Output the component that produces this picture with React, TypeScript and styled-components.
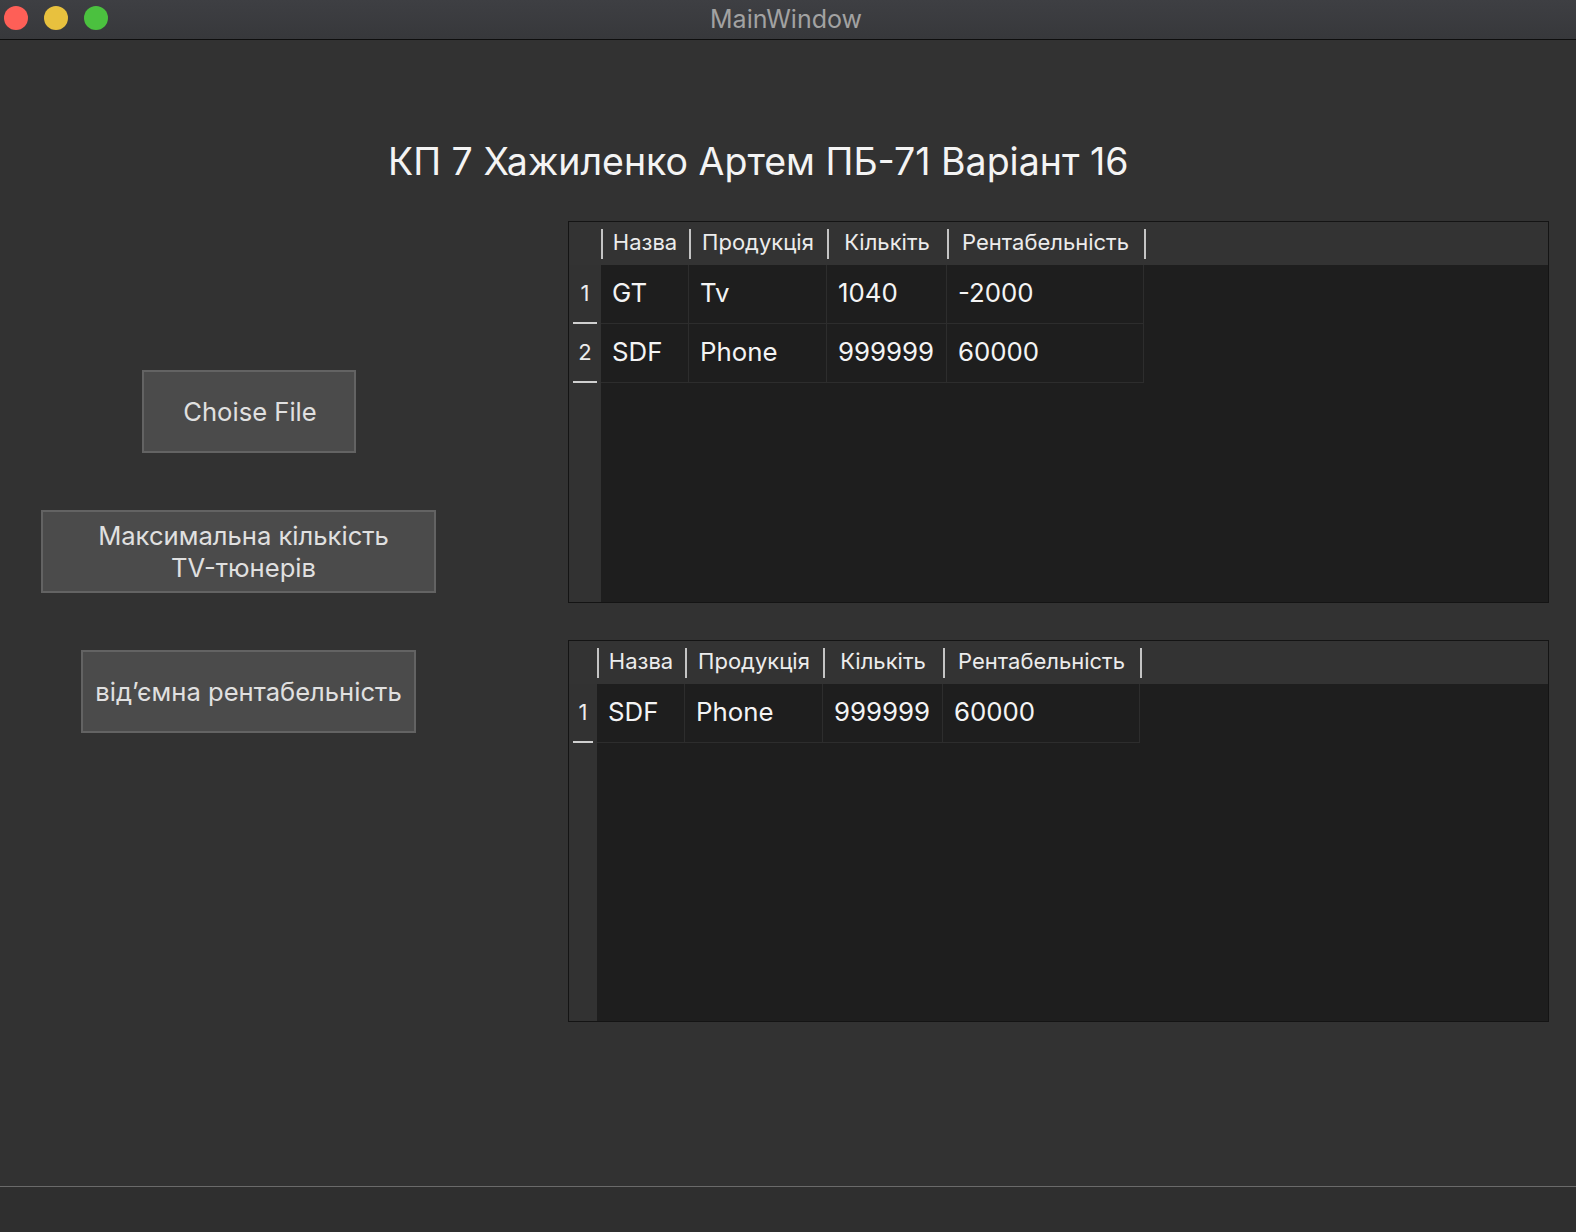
import React from "react";
import styled, { createGlobalStyle } from "styled-components";

const GlobalStyle = createGlobalStyle`
  html, body { margin: 0; padding: 0; background: #323232; }
  * { box-sizing: border-box; }
`;

const FONT = `Inter, "Noto Sans", "DejaVu Sans", sans-serif`;

const Window = styled.div`
  width: 1576px;
  height: 1232px;
  display: flex;
  flex-direction: column;
  background: #323232;
  font-family: ${FONT};
  overflow: hidden;
`;

const TitleBar = styled.div`
  position: relative;
  height: 40px;
  flex: none;
  display: flex;
  align-items: center;
  justify-content: center;
  background: linear-gradient(#3e3f43, #37383b);
  border-bottom: 1px solid #0e0e0e;
`;

const Lights = styled.div`
  position: absolute;
  left: 4px;
  top: 6px;
  display: flex;
  gap: 16px;
`;

const Light = styled.span<{ $c: string }>`
  width: 24px;
  height: 24px;
  border-radius: 50%;
  background: ${(p) => p.$c};
`;

const WindowTitle = styled.div`
  color: #a2a2a2;
  font-size: 25px;
  margin-left: -4px;
  margin-top: -2px;
`;

const Central = styled.div`
  flex: 1;
  display: flex;
  flex-direction: column;
  padding-top: 102px;
`;

const Heading = styled.h1`
  margin: 0 0 0 388px;
  font-weight: 400;
  font-size: 37.5px;
  line-height: 40px;
  height: 40px;
  color: #f4f4f4;
  white-space: nowrap;
`;

const Content = styled.div`
  display: flex;
  margin-top: 39px;
`;

const LeftPanel = styled.div`
  width: 568px;
  flex: none;
  display: flex;
  flex-direction: column;
  align-items: flex-start;
  padding-top: 149px;
  gap: 57px;
`;

const Button = styled.button<{ $left: number; $w: number; $shift?: number }>`
  margin-left: ${(p) => p.$left}px;
  width: ${(p) => p.$w}px;
  height: 83px;
  background: #4b4b4b;
  border: 2px solid #636363;
  color: #e0e0e0;
  font-family: ${FONT};
  font-size: 25.6px;
  line-height: 32px;
  padding: 0 0 0 ${(p) => p.$shift ?? 0}px;
  text-align: center;
`;

const RightPanel = styled.div`
  display: flex;
  flex-direction: column;
  gap: 37px;
`;

const TableFrame = styled.div`
  width: 981px;
  height: 382px;
  border: 1px solid #141414;
  background: #1e1e1e;
  display: flex;
  flex-direction: column;
`;

const HeaderRow = styled.div`
  height: 43px;
  flex: none;
  display: flex;
  background: #333333;
`;

const Corner = styled.div<{ $w: number }>`
  width: ${(p) => p.$w}px;
  flex: none;
`;

const HeaderCell = styled.div<{ $w: number; $last?: boolean }>`
  position: relative;
  width: ${(p) => p.$w}px;
  flex: none;
  display: flex;
  align-items: center;
  justify-content: center;
  color: #ececec;
  font-size: 22px;
  padding-bottom: 3px;
  white-space: nowrap;
  &::before {
    content: "";
    position: absolute;
    left: 0;
    top: 7px;
    bottom: 6px;
    width: 2px;
    background: #c4c4c4;
  }
  ${(p) =>
    p.$last
      ? `&::after {
    content: "";
    position: absolute;
    right: -2px;
    top: 7px;
    bottom: 6px;
    width: 2px;
    background: #c4c4c4;
  }`
      : ""}
`;

const Body = styled.div`
  flex: 1;
  display: flex;
`;

const VHeader = styled.div<{ $w: number }>`
  width: ${(p) => p.$w}px;
  flex: none;
  background: #323232;
  display: flex;
  flex-direction: column;
`;

const RowNumber = styled.div`
  position: relative;
  height: 59px;
  display: flex;
  align-items: center;
  justify-content: center;
  color: #ececec;
  font-size: 22px;
  padding-bottom: 3px;
  &::after {
    content: "";
    position: absolute;
    left: 4px;
    right: 4px;
    bottom: 0;
    height: 2px;
    background: #cfcfcf;
  }
`;

const Grid = styled.div`
  flex: 1;
  display: flex;
  flex-direction: column;
`;

const Row = styled.div`
  display: flex;
  height: 59px;
`;

const Cell = styled.div<{ $w: number }>`
  width: ${(p) => p.$w}px;
  flex: none;
  display: flex;
  align-items: center;
  padding-left: 11px;
  padding-bottom: 3px;
  border-right: 1px solid #2d2d2d;
  border-bottom: 1px solid #2d2d2d;
  color: #f4f4f4;
  font-size: 25.8px;
  white-space: nowrap;
`;

const StatusBar = styled.div`
  height: 46px;
  flex: none;
  border-top: 1px solid #6a6a6a;
  background: #2f2f2f;
`;

const COLS = [
  { title: "Назва", w: 88 },
  { title: "Продукція", w: 138 },
  { title: "Кількіть", w: 120 },
  { title: "Рентабельність", w: 197 },
];

type TableProps = { vw: number; rows: string[][] };

function DataTable({ vw, rows }: TableProps) {
  return (
    <TableFrame>
      <HeaderRow>
        <Corner $w={vw} />
        {COLS.map((c, i) => (
          <HeaderCell key={c.title} $w={c.w} $last={i === COLS.length - 1}>
            {c.title}
          </HeaderCell>
        ))}
      </HeaderRow>
      <Body>
        <VHeader $w={vw}>
          {rows.map((_, i) => (
            <RowNumber key={i}>{i + 1}</RowNumber>
          ))}
        </VHeader>
        <Grid>
          {rows.map((r, i) => (
            <Row key={i}>
              {r.map((v, j) => (
                <Cell key={j} $w={COLS[j].w}>
                  {v}
                </Cell>
              ))}
            </Row>
          ))}
        </Grid>
      </Body>
    </TableFrame>
  );
}

export default function App() {
  return (
    <>
      <GlobalStyle />
      <Window>
        <TitleBar>
          <Lights>
            <Light $c="#fe5f57" />
            <Light $c="#e8c13e" />
            <Light $c="#4bc13f" />
          </Lights>
          <WindowTitle>MainWindow</WindowTitle>
        </TitleBar>
        <Central>
          <Heading>КП 7 Хажиленко Артем ПБ-71 Варіант 16</Heading>
          <Content>
            <LeftPanel>
              <Button $left={142} $w={214} $shift={2}>Choise File</Button>
              <Button $left={41} $w={395} $shift={10}>
                Максимальна кількість
                <br />
                TV-тюнерів
              </Button>
              <Button $left={81} $w={335}>від’ємна рентабельність</Button>
            </LeftPanel>
            <RightPanel>
              <DataTable
                vw={32}
                rows={[
                  ["GT", "Tv", "1040", "-2000"],
                  ["SDF", "Phone", "999999", "60000"],
                ]}
              />
              <DataTable vw={28} rows={[["SDF", "Phone", "999999", "60000"]]} />
            </RightPanel>
          </Content>
        </Central>
        <StatusBar />
      </Window>
    </>
  );
}
